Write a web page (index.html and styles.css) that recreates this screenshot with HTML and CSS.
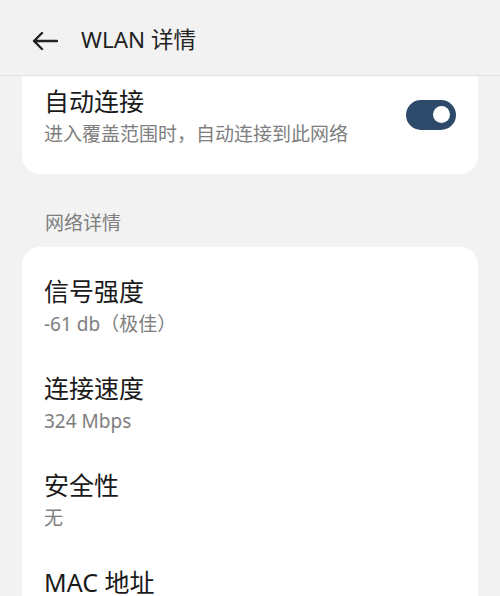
FILE: index.html
```html
<!DOCTYPE html>
<html>
<head>
    <title>WLAN 详情</title>
    <link rel="stylesheet" href="styles.css">
</head>
<body>
    <header class="topbar">
        <button class="back" aria-label="返回">
            <svg width="26" height="20" viewBox="0 0 26 20">
                <path d="M2 10 H25 M10 2 L2 10 L10 18" fill="none" stroke="#222" stroke-width="2.4" stroke-linecap="round" stroke-linejoin="round"/>
            </svg>
        </button>
        <h1>WLAN 详情</h1>
    </header>

    <section class="card card-top">
        <div class="row row-switch">
            <div class="text">
                <div class="title">自动连接</div>
                <div class="sub">进入覆盖范围时，自动连接到此网络</div>
            </div>
            <div class="toggle on"><span class="knob"></span></div>
        </div>
    </section>

    <div class="section-label">网络详情</div>

    <section class="card card-list">
        <div class="row">
            <div class="title">信号强度</div>
            <div class="sub">-61 db（极佳）</div>
        </div>
        <div class="row">
            <div class="title">连接速度</div>
            <div class="sub">324 Mbps</div>
        </div>
        <div class="row">
            <div class="title">安全性</div>
            <div class="sub">无</div>
        </div>
        <div class="row">
            <div class="title">MAC 地址</div>
        </div>
    </section>
</body>
</html>
```

FILE: styles.css
```css
/* General Styles */
body {
    font-family: "Noto Sans", "Noto Sans CJK SC", sans-serif;
    margin: 0;
    padding: 0;
    background-color: #f2f2f2;
    color: #1a1a1a;
    width: 500px;
    height: 596px;
    overflow: hidden;
}

/* Header */
.topbar {
    height: 75px;
    display: flex;
    align-items: center;
    padding: 0 0 0 32px;
    background-color: #f2f2f2;
    border-bottom: 1px solid #e3e3e3;
}

.topbar .back {
    background: none;
    border: none;
    padding: 0;
    width: 26px;
    height: 20px;
    margin-right: 23px;
    margin-top: 7px;
}

.topbar h1 {
    margin: 0;
    font-size: 22.5px;
    font-weight: 400;
    color: #222;
    line-height: 30px;
    margin-top: 5px;
}

/* Cards */
.card {
    background-color: #fff;
    margin: 0 22px;
    border-radius: 18px;
    padding: 0 22px;
}

.card-top {
    border-radius: 0 0 18px 18px;
    padding-top: 8px;
    padding-bottom: 24px;
}

.card-list {
    padding-top: 12px;
    padding-bottom: 20px;
}

.row {
    padding: 15px 0 16px;
}

.row-switch {
    display: flex;
    align-items: center;
    justify-content: space-between;
    padding: 0;
}

.title {
    font-size: 25px;
    line-height: 34px;
    color: #1a1a1a;
}

.sub {
    font-size: 19px;
    line-height: 32px;
    color: #7e7e7e;
}

/* Toggle switch */
.toggle {
    width: 50px;
    height: 30px;
    border-radius: 15px;
    background-color: #2d4a6b;
    display: flex;
    align-items: center;
    justify-content: flex-end;
    padding-right: 6px;
    box-sizing: border-box;
    margin-bottom: 5px;
}

.toggle .knob {
    width: 17px;
    height: 17px;
    border-radius: 50%;
    background-color: #fff;
}

/* Section label */
.section-label {
    font-size: 19px;
    line-height: 26px;
    color: #7e7e7e;
    margin: 36px 22px 11px;
    padding-left: 23px;
}
```
